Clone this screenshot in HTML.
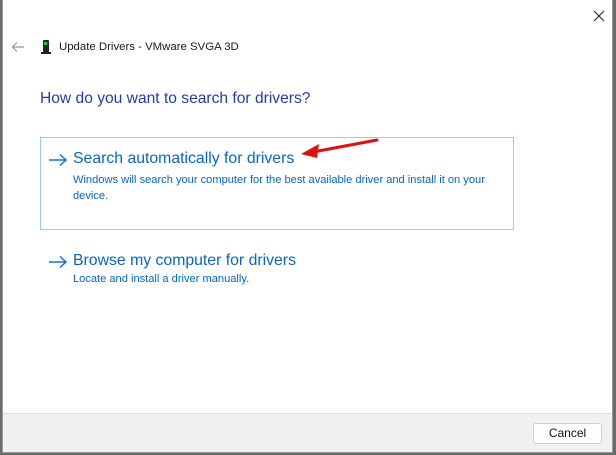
<!DOCTYPE html>
<html><head><meta charset="utf-8"><style>
*{margin:0;padding:0;box-sizing:border-box}
body{width:616px;height:455px;overflow:hidden;background:#6b6b6b;font-family:"Liberation Sans",sans-serif;position:relative}
.win{position:absolute;left:2px;top:0;width:611px;height:453px;background:#fff;border:1px solid #999;border-top:none}
.foot{position:absolute;left:0;right:0;bottom:0;height:39px;background:#f0f0f0;border-top:1px solid #e0e0e0}
.btn{position:absolute;right:10px;top:9px;width:69px;height:21px;border:1px solid #d0d0d0;border-radius:3px;background:#fdfdfd;font-size:12px;text-align:center;line-height:19px;color:#111}
.t{position:absolute;color:#1a1a1a;font-size:11.4px}
.blue{color:#0a64c8;position:absolute}
.box{position:absolute;left:37px;top:137px;width:474px;height:93px;border:1px solid #9dcbf0}
</style></head><body>
<div class="win">
<svg style="position:absolute;left:590px;top:10px" width="12" height="12"><path d="M1 1L11 11M11 1L1 11" stroke="#222" stroke-width="1.1"/></svg>
<svg style="position:absolute;left:8px;top:41px" width="14" height="12"><path d="M13 6H2M6 1.5L1.5 6L6 10.5" stroke="#999" fill="none" stroke-width="1.2"/></svg>
<div style="position:absolute;left:40px;top:40px;width:6px;height:12px;background:#222;border-radius:1px"><div style="position:absolute;left:1px;top:2px;width:3px;height:3px;background:#2c2"></div></div>
<div style="position:absolute;left:38px;top:52px;width:10px;height:2px;background:#222"></div>
<div class="t" style="left:56px;top:41px">Update Drivers - VMware SVGA 3D</div>
<div class="blue" style="left:37px;top:90px;font-size:15.6px;color:#1e3faa">How do you want to search for drivers?</div>
<div class="box"></div>
<svg style="position:absolute;left:45px;top:153px" width="20" height="14"><path d="M1 7H18M12 1.5L18 7L12 12.5" stroke="#1a73c8" fill="none" stroke-width="1.5"/></svg>
<div class="blue" style="left:70px;top:150px;font-size:15.8px">Search automatically for drivers</div>
<div class="blue" style="left:70px;top:172px;font-size:11.1px;line-height:16px;width:430px">Windows will search your computer for the best available driver and install it on your device.</div>
<svg style="position:absolute;left:290px;top:136px" width="90" height="26"><path d="M84 4L20 16" stroke="#e01010" stroke-width="3" stroke-linecap="round"/><path d="M8 18L26 8L24 22Z" fill="#e01010"/></svg>
<svg style="position:absolute;left:45px;top:255px" width="20" height="14"><path d="M1 7H18M12 1.5L18 7L12 12.5" stroke="#1a73c8" fill="none" stroke-width="1.5"/></svg>
<div class="blue" style="left:70px;top:252px;font-size:15.8px">Browse my computer for drivers</div>
<div class="blue" style="left:70px;top:273px;font-size:11.1px">Locate and install a driver manually.</div>
<div class="foot"><div class="btn">Cancel</div></div>
</div>
</body></html>
